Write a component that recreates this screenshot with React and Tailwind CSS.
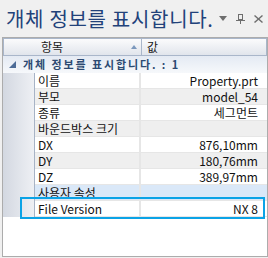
import React from 'react';

const rows = [
  { name: '이름', value: 'Property.prt' },
  { name: '부모', value: 'model_54' },
  { name: '종류', value: '세그먼트' },
  { name: '바운드박스 크기', value: '' },
  { name: 'DX', value: '876,10mm' },
  { name: 'DY', value: '180,76mm' },
  { name: 'DZ', value: '389,97mm' },
  { name: '사용자 속성', value: '', hover: true },
  { name: 'File Version', value: 'NX 8' },
];

const font = { fontFamily: '"Noto Sans CJK KR", "Noto Sans", sans-serif' };

const App = () => {
  return (
    <div className="relative w-[268px] h-[258px] bg-[#f0f0f0] overflow-hidden" style={font}>
      {/* Caption bar */}
      <div className="h-[37px] flex items-center pl-[6px] pr-[5px]">
        <div className="text-[20px] leading-none tracking-[0.7px] text-[#22427a] whitespace-nowrap">개체 정보를 표시합니다.</div>
        <div className="ml-auto flex items-center gap-[9px] text-[#6e6e6e]">
          <svg width="8" height="5" viewBox="0 0 8 5"><polygon points="0,0 8,0 4,5" fill="#6e6e6e" /></svg>
          <svg width="9" height="10" viewBox="0 0 9 10" fill="none" stroke="#6e6e6e" strokeWidth="1">
            <rect x="2.5" y="0.5" width="4" height="5" />
            <line x1="0" y1="6.5" x2="9" y2="6.5" />
            <line x1="4.5" y1="6.5" x2="4.5" y2="10" />
          </svg>
          <svg width="9" height="8" viewBox="0 0 9 8" stroke="#6e6e6e" strokeWidth="1.4">
            <line x1="0.5" y1="0.5" x2="8.5" y2="7.5" />
            <line x1="8.5" y1="0.5" x2="0.5" y2="7.5" />
          </svg>
        </div>
      </div>

      {/* Property grid */}
      <div className="ml-[2px] w-[266px] h-[220px] border border-[#acacac] bg-white">
        {/* Column header */}
        <div className="flex h-[18px] border border-[#a9b6ca] bg-gradient-to-b from-[#fbfbfc] to-[#e1e5ec] text-[12px] leading-[14px] text-[#1a1a1a]">
          <div className="w-[138px] flex items-center border-r border-[#a9b6ca] pl-[37px] pr-[4px]">
            <span>항목</span>
            <svg className="ml-auto" width="6" height="4" viewBox="0 0 6 4"><polygon points="0,4 3,0 6,4" fill="#7c98bd" /></svg>
          </div>
          <div className="flex-1 flex items-center pl-[5px]">값</div>
        </div>

        {/* Category row */}
        <div className="flex items-center h-[17px] bg-gradient-to-b from-[#e4eaf3] to-[#f6f8fb]">
          <svg className="ml-[6px]" width="7" height="7" viewBox="0 0 7 7"><polygon points="7,0 7,7 0,7" fill="#4d6c97" /></svg>
          <span className="ml-[7px] -mt-px text-[11px] leading-[13px] font-bold tracking-[1.9px] text-[#2c4a72] whitespace-nowrap">개체 정보를 표시합니다. : 1</span>
        </div>

        {/* Property rows */}
        {rows.map((r, i) => (
          <div key={r.name} className="flex h-[16px] text-[12px] leading-[14px] text-[#111]">
            <div className="w-[32px] border-r border-[#a7b3c6] bg-gradient-to-r from-[#d3d8e1] to-[#eef0f4]"></div>
            <div
              className={`flex flex-1 border-b border-[#e6e6e6] ${
                r.hover ? 'bg-[#dae8f8]' : i % 2 === 1 ? 'bg-[#efefef]' : 'bg-white'
              }`}
            >
              <div className="w-[106px] border-r-2 border-[#e6e6e6] pl-[3px] flex items-center whitespace-nowrap">{r.name}</div>
              <div className="flex-1 flex items-center justify-end pr-[9px] whitespace-nowrap">{r.value}</div>
            </div>
          </div>
        ))}
      </div>

      {/* Highlight box */}
      <div className="absolute left-[20px] top-[197px] w-[245px] h-[22px] border-2 border-[#0ba3e6]"></div>
    </div>
  );
};

export default App;
